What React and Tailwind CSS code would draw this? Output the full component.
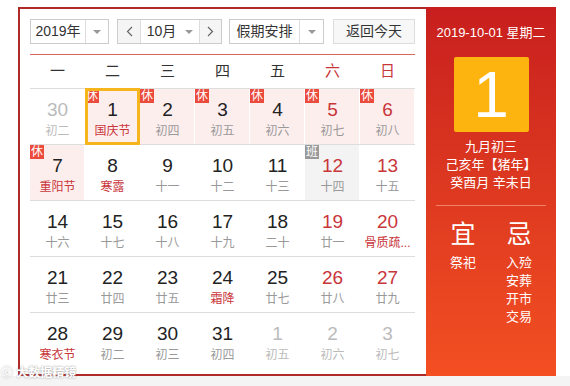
import React from "react";

const font = { fontFamily: '"Liberation Sans", "Noto Sans CJK SC", sans-serif' };

const rows = [
  [
    { d: 30, l: "初二", dim: true },
    { d: 1, l: "国庆节", rest: true, fest: true, sel: true },
    { d: 2, l: "初四", rest: true },
    { d: 3, l: "初五", rest: true },
    { d: 4, l: "初六", rest: true },
    { d: 5, l: "初七", rest: true, we: true },
    { d: 6, l: "初八", rest: true, we: true },
  ],
  [
    { d: 7, l: "重阳节", rest: true, fest: true },
    { d: 8, l: "寒露", fest: true },
    { d: 9, l: "十一" },
    { d: 10, l: "十二" },
    { d: 11, l: "十三" },
    { d: 12, l: "十四", work: true, we: true },
    { d: 13, l: "十五", we: true },
  ],
  [
    { d: 14, l: "十六" },
    { d: 15, l: "十七" },
    { d: 16, l: "十八" },
    { d: 17, l: "十九" },
    { d: 18, l: "二十" },
    { d: 19, l: "廿一", we: true },
    { d: 20, l: "骨质疏...", we: true, fest: true },
  ],
  [
    { d: 21, l: "廿三" },
    { d: 22, l: "廿四" },
    { d: 23, l: "廿五" },
    { d: 24, l: "霜降", fest: true },
    { d: 25, l: "廿七" },
    { d: 26, l: "廿八", we: true },
    { d: 27, l: "廿九", we: true },
  ],
  [
    { d: 28, l: "寒衣节", fest: true },
    { d: 29, l: "初二" },
    { d: 30, l: "初三" },
    { d: 31, l: "初四" },
    { d: 1, l: "初五", dim: true },
    { d: 2, l: "初六", dim: true },
    { d: 3, l: "初七", dim: true },
  ],
];

function Arrow() {
  return <span className="w-0 h-0 border-x-[4px] border-x-transparent border-t-[4px] border-t-[#999]" />;
}

function Cell({ c }) {
  const bg = c.rest ? "bg-[#fdeeee]" : c.work ? "bg-[#f3f3f3]" : "bg-white";
  const num = c.dim ? "text-[#bbb]" : c.we ? "text-[#c9363a]" : "text-[#222]";
  const lunar = c.dim ? "text-[#bbb]" : c.fest ? "text-[#c9363a]" : "text-[#999]";
  return (
    <div className={`relative h-[55px] flex flex-col items-center shadow-[inset_-1px_0_0_#fff] ${bg}`}>
      {c.rest && (
        <span className="absolute left-0 top-0 w-[14px] h-[14px] bg-[#ea4b3c] text-white text-[12px] leading-[14px] text-center">休</span>
      )}
      {c.work && (
        <span className="absolute left-0 top-0 w-[14px] h-[14px] bg-[#999] text-white text-[12px] leading-[14px] text-center">班</span>
      )}
      <span className={`mt-[10px] text-[19px] leading-[22px] ${num}`}>{c.d}</span>
      <span className={`mt-[3px] text-[12px] leading-[15px] ${lunar}`}>{c.l}</span>
      {c.sel && <span className="absolute inset-x-0 -top-px -bottom-px border-[3px] border-[#f6b51c]" />}
    </div>
  );
}

export default function App() {
  return (
    <div className="relative w-[570px] h-[386px] bg-white overflow-hidden" style={font}>
      <div className="ml-[18px] mt-[7px] flex w-[538px] h-[369px]">
        <div className="w-[408px] border-l-2 border-y-2 border-[#b02a2a] pl-[10px] pt-[10px]">
          <div className="flex items-center h-[25px] text-[14px] text-[#333]">
            <div className="flex h-full w-[79px] border border-[#ccc] bg-white">
              <span className="flex-1 flex items-center justify-center">2019年</span>
              <span className="w-[23px] border-l border-[#ddd] flex items-center justify-center"><Arrow /></span>
            </div>
            <div className="ml-[8px] flex h-full w-[105px] border border-[#ccc]">
              <span className="w-[22px] bg-[#f5f5f5] flex items-center justify-center text-[#666]">
                <svg width="7" height="11" viewBox="0 0 7 11"><path d="M6 1L1.5 5.5L6 10" fill="none" stroke="#666" strokeWidth="1.2" /></svg>
              </span>
              <span className="w-[60px] border-x border-[#ddd] flex items-center justify-center gap-[9px] bg-white">10月<Arrow /></span>
              <span className="flex-1 bg-[#f5f5f5] flex items-center justify-center">
                <svg width="7" height="11" viewBox="0 0 7 11"><path d="M1 1L5.5 5.5L1 10" fill="none" stroke="#666" strokeWidth="1.2" /></svg>
              </span>
            </div>
            <div className="ml-[7px] flex h-full w-[95px] border border-[#ccc] bg-white">
              <span className="flex-1 flex items-center justify-center">假期安排</span>
              <span className="w-[24px] border-l border-[#ddd] flex items-center justify-center"><Arrow /></span>
            </div>
            <div className="ml-[9px] flex h-full w-[82px] border border-[#ddd] bg-[#f7f7f7] items-center justify-center">返回今天</div>
          </div>
          <div className="mt-[10px] w-[385px] border-t border-[#d9675e]">
            <div className="grid grid-cols-7 h-[34px] items-center text-center text-[15px] border-b border-[#ddd]">
              {["一", "二", "三", "四", "五"].map((w) => (
                <span key={w} className="text-[#333]">{w}</span>
              ))}
              <span className="text-[#c9363a]">六</span>
              <span className="text-[#c9363a]">日</span>
            </div>
            {rows.map((r, i) => (
              <div key={i} className={`grid grid-cols-7 ${i < rows.length - 1 ? "border-b border-[#ddd]" : ""}`}>
                {r.map((c, j) => (
                  <Cell key={j} c={c} />
                ))}
              </div>
            ))}
          </div>
        </div>
        <div className="w-[130px] bg-gradient-to-b from-[#c81e1e] to-[#f34f22] flex flex-col items-center text-white">
          <div className="mt-[18px] text-[13px] leading-[16px]">2019-10-01 星期二</div>
          <div className="mt-[16px] w-[75px] h-[75px] rounded-[2px] bg-[#fdb40f] flex items-center justify-center text-[64px] font-light leading-none">1</div>
          <div className="mt-[6px] text-[13px] leading-[18px] text-center">
            <div>九月初三</div>
            <div>己亥年【猪年】</div>
            <div>癸酉月 辛未日</div>
          </div>
          <div className="mt-[13px] w-[110px] border-t border-[#f2806a]" />
          <div className="mt-[14px] flex w-full justify-center gap-[28px] text-center">
            <div className="w-[28px] flex flex-col items-center">
              <span className="text-[25px] leading-[28px]">宜</span>
              <span className="mt-[6px] text-[13px] leading-[18px]">祭祀</span>
            </div>
            <div className="w-[28px] flex flex-col items-center">
              <span className="text-[25px] leading-[28px]">忌</span>
              <div className="mt-[6px] text-[13px] leading-[18px] flex flex-col">
                <span>入殓</span>
                <span>安葬</span>
                <span>开市</span>
                <span>交易</span>
              </div>
            </div>
          </div>
        </div>
      </div>
      <div className="h-[10px] bg-[#f4f4f4]" />
      <div className="absolute left-[1px] top-[366px] text-[12px] leading-[14px] text-white font-bold [text-shadow:0_0_2px_#888]">
        ⓒ 大数据精镜
      </div>
    </div>
  );
}
